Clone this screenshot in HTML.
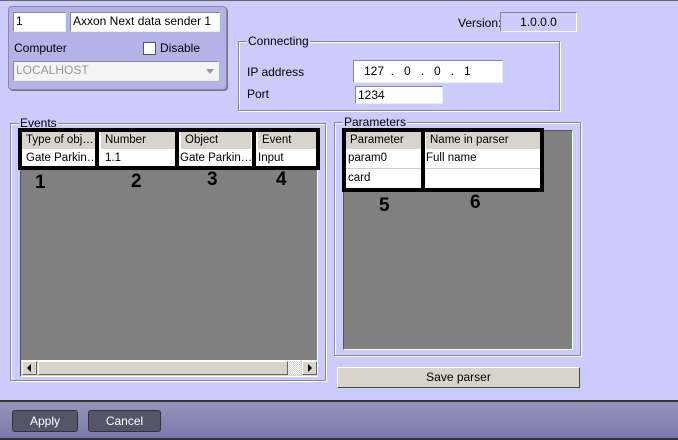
<!DOCTYPE html>
<html><head><style>
*{box-sizing:border-box;margin:0;padding:0}
body{width:678px;height:440px;background:#ccccfc;font-family:"Liberation Sans",sans-serif;font-size:12px;color:#000;position:relative;overflow:hidden}
.a{position:absolute}
.in{position:absolute;background:#fff;border:1px solid #888;border-right-color:#eee;border-bottom-color:#eee;padding:1px 2px;font-size:12px;white-space:nowrap;line-height:15px}
.grp{position:absolute;border:1px solid #888;box-shadow:1px 1px 0 #fff, inset 1px 1px 0 #fff}
.gl{position:absolute;top:-8px;left:8px;background:#ccccfc;padding:0 1px;font-size:12px}
.gray{position:absolute;background:#808080;border:1px solid #555;border-right-color:#fff;border-bottom-color:#fff}
.tb{position:absolute;border:4px solid #000;background:#fff}
.cell{position:absolute;font-size:11.5px;white-space:nowrap;padding-left:4px;line-height:17px}
.hd{background:#d8d4cc}
.num{position:absolute;font-weight:bold;font-size:19px}
.btn{position:absolute;background:#55556a;color:#fff;border:1px solid #333;border-radius:3px;text-align:center;line-height:20px;font-size:12px}
</style></head><body>
<div class="a" style="left:0;top:0;width:678px;height:1px;background:#666"></div>
<div class="a" style="left:8px;top:6px;width:219px;height:84px;background:#b3b3e8;border:1px solid #8888aa;border-radius:4px;box-shadow:1px 1px 0 #777"></div>
<div class="in" style="left:13px;top:12px;width:53px;height:20px">1</div>
<div class="in" style="left:70px;top:12px;width:150px;height:20px">Axxon Next data sender 1</div>
<div class="a" style="left:14px;top:41px">Computer</div>
<div class="a" style="left:143px;top:42px;width:13px;height:13px;background:#fff;border:1px solid #555"></div>
<div class="a" style="left:160px;top:41px">Disable</div>
<div class="in" style="left:13px;top:61px;width:206px;height:20px;color:#999;background:#f4f4f4">LOCALHOST<span class="a" style="right:4px;top:7px;border:4px solid transparent;border-top:5px solid #999"></span></div>
<div class="a" style="left:458px;top:16px">Version:</div>
<div class="a" style="left:500px;top:12px;width:77px;height:20px;border:1px solid #888;border-right-color:#fff;border-bottom-color:#fff;text-align:center;line-height:18px">1.0.0.0</div>
<div class="grp" style="left:238px;top:41px;width:322px;height:70px"><span class="gl">Connecting</span></div>
<div class="a" style="left:247px;top:65px">IP address</div>
<div class="a" style="left:247px;top:87px">Port</div>
<div class="in" style="left:353px;top:60px;width:150px;height:23px;padding-left:10px;line-height:19px">127&nbsp;&nbsp;.&nbsp;&nbsp;&nbsp;0&nbsp;&nbsp;&nbsp;.&nbsp;&nbsp;&nbsp;0&nbsp;&nbsp;&nbsp;.&nbsp;&nbsp;&nbsp;1</div>
<div class="in" style="left:355px;top:86px;width:88px;height:18px;line-height:14px">1234</div>

<div class="grp" style="left:10px;top:123px;width:316px;height:258px"><span class="gl">Events</span></div>
<div class="gray" style="left:20px;top:130px;width:298px;height:247px"></div>
<div class="tb" style="left:18px;top:128px;width:302px;height:42px"></div>
<div class="cell hd" style="left:22px;top:132px;width:74px">Type of obj…</div>
<div class="cell hd" style="left:101px;top:132px;width:75px">Number</div>
<div class="cell hd" style="left:181px;top:132px;width:70px">Object</div>
<div class="cell hd" style="left:258px;top:132px;width:58px">Event</div>
<div class="cell" style="left:22px;top:150px">Gate Parkin…</div>
<div class="cell" style="left:101px;top:150px">1.1</div>
<div class="cell" style="left:176px;top:150px">Gate Parkin…</div>
<div class="cell" style="left:254px;top:150px">Input</div>
<div class="a" style="left:95px;top:130px;width:4px;height:38px;background:#000"></div>
<div class="a" style="left:175px;top:130px;width:4px;height:38px;background:#000"></div>
<div class="a" style="left:252px;top:130px;width:4px;height:38px;background:#000"></div>
<div class="num" style="left:35px;top:172px">1</div>
<div class="num" style="left:131px;top:171px">2</div>
<div class="num" style="left:207px;top:169px">3</div>
<div class="num" style="left:276px;top:169px">4</div>
<div class="a" style="left:21px;top:360px;width:296px;height:16px;background:#d8d4cc;border-top:1px solid #fff"></div>
<div class="a" style="left:22px;top:361px;width:15px;height:14px;border:1px solid #fff;border-right-color:#666;border-bottom-color:#666"><span class="a" style="left:4px;top:2px;border:4px solid transparent;border-right:4px solid #000;border-left:0"></span></div>
<div class="a" style="left:38px;top:361px;width:250px;height:14px;border:1px solid #fff;border-right-color:#666;border-bottom-color:#666"></div>
<div class="a" style="left:288px;top:361px;width:13px;height:14px;background:repeating-conic-gradient(#fff 0 25%,#d0d0d0 0 50%) 0 0/2px 2px"></div>
<div class="a" style="left:302px;top:361px;width:15px;height:14px;border:1px solid #fff;border-right-color:#666;border-bottom-color:#666"><span class="a" style="left:5px;top:2px;border:4px solid transparent;border-left:4px solid #000;border-right:0"></span></div>

<div class="grp" style="left:334px;top:122px;width:247px;height:234px"><span class="gl">Parameters</span></div>
<div class="gray" style="left:343px;top:130px;width:230px;height:220px"></div>
<div class="tb" style="left:342px;top:128px;width:202px;height:64px"></div>
<div class="cell hd" style="left:346px;top:132px;width:75px">Parameter</div>
<div class="cell hd" style="left:426px;top:132px;width:114px">Name in parser</div>
<div class="cell" style="left:344px;top:150px">param0</div>
<div class="cell" style="left:422px;top:150px">Full name</div>
<div class="cell" style="left:344px;top:170px">card</div>
<div class="a" style="left:346px;top:168px;width:194px;height:1px;background:#ccc"></div>
<div class="a" style="left:421px;top:130px;width:4px;height:60px;background:#000"></div>
<div class="num" style="left:379px;top:195px">5</div>
<div class="num" style="left:470px;top:192px">6</div>
<div class="a" style="left:337px;top:367px;width:243px;height:21px;background:#d8d4cc;border:1px solid #fff;border-right-color:#444;border-bottom-color:#444;text-align:center;line-height:18px">Save parser</div>

<div class="a" style="left:0;top:400px;width:678px;height:40px;background:linear-gradient(#9494bc,#7878a8);border-top:2px solid #333"></div>
<div class="btn" style="left:12px;top:410px;width:66px;height:22px">Apply</div>
<div class="btn" style="left:88px;top:410px;width:73px;height:22px">Cancel</div>
<div class="a" style="left:0;top:438px;width:678px;height:2px;background:#333"></div>
</body></html>
